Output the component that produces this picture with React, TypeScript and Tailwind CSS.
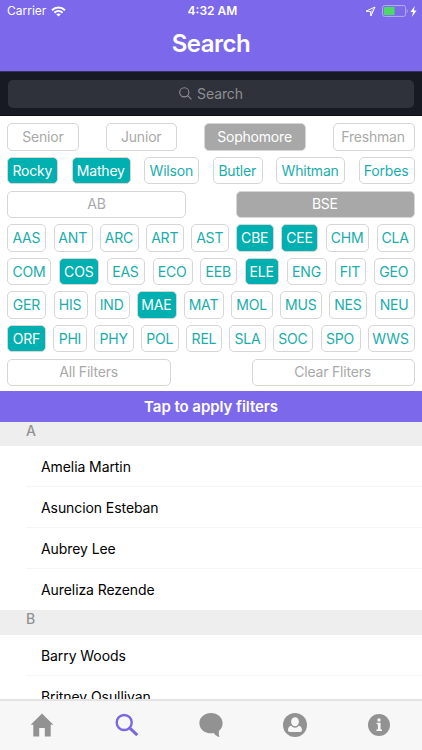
import { useState } from 'react';

interface Chip {
  label: string;
  width: number;
  on?: boolean;
}

interface ChipRow {
  tone: 'gray' | 'teal';
  chips: Chip[];
}

const initialRows: ChipRow[] = [
  {
    tone: 'gray',
    chips: [
      { label: 'Senior', width: 72 },
      { label: 'Junior', width: 71.5 },
      { label: 'Sophomore', width: 102, on: true },
      { label: 'Freshman', width: 82 },
    ],
  },
  {
    tone: 'teal',
    chips: [
      { label: 'Rocky', width: 51, on: true },
      { label: 'Mathey', width: 59, on: true },
      { label: 'Wilson', width: 55 },
      { label: 'Butler', width: 50 },
      { label: 'Whitman', width: 69 },
      { label: 'Forbes', width: 56 },
    ],
  },
  {
    tone: 'gray',
    chips: [
      { label: 'AB', width: 179 },
      { label: 'BSE', width: 178.5, on: true },
    ],
  },
  {
    tone: 'teal',
    chips: [
      { label: 'AAS', width: 39 },
      { label: 'ANT', width: 39 },
      { label: 'ARC', width: 39 },
      { label: 'ART', width: 38 },
      { label: 'AST', width: 37.5 },
      { label: 'CBE', width: 38, on: true },
      { label: 'CEE', width: 37, on: true },
      { label: 'CHM', width: 43.5 },
      { label: 'CLA', width: 38 },
    ],
  },
  {
    tone: 'teal',
    chips: [
      { label: 'COM', width: 44 },
      { label: 'COS', width: 40, on: true },
      { label: 'EAS', width: 37.5 },
      { label: 'ECO', width: 40 },
      { label: 'EEB', width: 36.5 },
      { label: 'ELE', width: 34.5, on: true },
      { label: 'ENG', width: 39.5 },
      { label: 'FIT', width: 31.5 },
      { label: 'GEO', width: 40.5 },
    ],
  },
  {
    tone: 'teal',
    chips: [
      { label: 'GER', width: 39 },
      { label: 'HIS', width: 34 },
      { label: 'IND', width: 35 },
      { label: 'MAE', width: 40, on: true },
      { label: 'MAT', width: 40 },
      { label: 'MOL', width: 42 },
      { label: 'MUS', width: 42 },
      { label: 'NES', width: 38 },
      { label: 'NEU', width: 40 },
    ],
  },
  {
    tone: 'teal',
    chips: [
      { label: 'ORF', width: 39, on: true },
      { label: 'PHI', width: 34 },
      { label: 'PHY', width: 39.5 },
      { label: 'POL', width: 38.5 },
      { label: 'REL', width: 36 },
      { label: 'SLA', width: 37 },
      { label: 'SOC', width: 40 },
      { label: 'SPO', width: 40 },
      { label: 'WWS', width: 47 },
    ],
  },
  {
    tone: 'gray',
    chips: [
      { label: 'All Filters', width: 163.5 },
      { label: 'Clear Fliters', width: 163 },
    ],
  },
];

const sections = [
  { letter: 'A', names: ['Amelia Martin', 'Asuncion Esteban', 'Aubrey Lee', 'Aureliza Rezende'] },
  { letter: 'B', names: ['Barry Woods', 'Britney Osullivan'] },
];

function chipColors(tone: ChipRow['tone'], on?: boolean) {
  if (tone === 'teal') {
    return on ? 'bg-[#00b0b0] text-white' : 'bg-white text-[#1aadaa]';
  }
  return on ? 'bg-[#a8a8a8] text-white' : 'bg-white text-[#a9a9a9]';
}

function StatusBar() {
  return (
    <div className="grid h-[22px] grid-cols-3 items-center text-[12px] text-white">
      <div className="flex items-center gap-[5px] pl-[7px]">
        <span className="text-[12px]">Carrier</span>
        <svg width="15" height="11" viewBox="0 0 15 11" fill="none" stroke="currentColor" strokeWidth="2">
          <path d="M1 4.2C4.7 0.5 10.3 0.5 14 4.2" />
          <path d="M3.4 6.7C5.8 4.4 9.2 4.4 11.6 6.7" />
          <path d="M7.5 10.6L5.2 8.3C6.5 7.1 8.5 7.1 9.8 8.3Z" fill="currentColor" stroke="none" />
        </svg>
      </div>
      <div className="pl-[3px] text-center text-[12px] font-semibold">4:32 AM</div>
      <div className="flex items-center justify-end pr-[5px]">
        <svg className="mr-[6px]" width="11" height="11" viewBox="0 0 11 11" fill="none" stroke="currentColor" strokeWidth="1">
          <path d="M1 5.2L10 1L5.9 10L5.5 5.5Z" strokeLinejoin="round" />
          <path d="M5.5 5.5L10 1L5.9 10Z" fill="currentColor" fillOpacity="0.45" stroke="none" />
        </svg>
        <svg width="27" height="12" viewBox="0 0 27 12">
          <rect x="0.6" y="0.6" width="23" height="10.8" rx="2" fill="none" stroke="#b9aef5" />
          <rect x="2" y="2" width="10.6" height="8" rx="0.6" fill="#4cd964" />
          <path d="M24.8 4V8C26 7.6 26 4.4 24.8 4Z" fill="#b9aef5" />
        </svg>
        <svg className="ml-px" width="7" height="11" viewBox="0 0 7 11" fill="currentColor">
          <path d="M4.8 0L0.4 6H3.1L1.8 11L6.6 4.6H3.8Z" />
        </svg>
      </div>
    </div>
  );
}

function TabBar() {
  return (
    <nav className="grid h-[51px] shrink-0 grid-cols-5 border-t-2 border-[#e3e3e3] bg-[#f7f7f7] text-[#929292]">
      <button className="flex items-center justify-center pb-px">
        <svg width="24" height="24" viewBox="0 0 24 24" fill="currentColor">
          <path d="M12 0.5L23.3 11.7H20.7V23.5H14.8V15H9.2V23.5H3.3V11.7H0.7Z" />
        </svg>
      </button>
      <button className="flex items-center justify-center pb-[2px] text-[#7b68e0]">
        <svg width="24" height="24" viewBox="0 0 24 24" fill="none" stroke="currentColor">
          <circle cx="9.2" cy="9.5" r="7.5" strokeWidth="2.4" />
          <path d="M14.6 14.8L22.3 22.2" strokeWidth="3" />
        </svg>
      </button>
      <button className="flex items-center justify-center pb-px">
        <svg width="24" height="26" viewBox="0 0 24 26" fill="currentColor">
          <path d="M12 1C5.5 1 0.4 5.3 0.4 11.2C0.4 17 5.5 21.3 12 21.3C13 21.3 13.9 21.2 14.8 21C16 23 17.8 24.6 20.5 25C19.7 23.2 19.7 21.2 20 18.8C22.3 17 23.6 14.3 23.6 11.2C23.6 5.3 18.5 1 12 1Z" />
        </svg>
      </button>
      <button className="flex items-center justify-center pb-px">
        <svg width="24" height="24" viewBox="0 0 24 24">
          <circle cx="12" cy="12" r="12" fill="currentColor" />
          <ellipse cx="12" cy="8.8" rx="3.9" ry="4.5" fill="#f7f7f7" />
          <path d="M8.2 12.8C9.2 14 10.5 14.7 12 14.7C13.5 14.7 14.8 14 15.8 12.8C18 13.2 19 14.6 19 17.3C19 18.4 18.2 19 17 19H7C5.8 19 5 18.4 5 17.3C5 14.6 6 13.2 8.2 12.8Z" fill="#f7f7f7" />
        </svg>
      </button>
      <button className="flex items-center justify-center pr-px pb-px">
        <svg width="22" height="22" viewBox="0 0 22 22">
          <circle cx="11" cy="11" r="11" fill="currentColor" />
          <circle cx="11" cy="6" r="1.7" fill="#f7f7f7" />
          <path d="M8.6 8.8H12.6V15.5H14V17H8.4V15.5H9.9V10.2H8.6Z" fill="#f7f7f7" />
        </svg>
      </button>
    </nav>
  );
}

export default function App() {
  const [rows, setRows] = useState<ChipRow[]>(initialRows);

  const toggle = (rowIndex: number, label: string) => {
    setRows(prev => prev.map((row, i) => (
      i !== rowIndex
        ? row
        : { ...row, chips: row.chips.map(c => (c.label === label ? { ...c, on: !c.on } : c)) }
    )));
  };

  return (
    <div className="flex h-[750px] w-[422px] flex-col overflow-hidden bg-white font-[Inter,sans-serif]">
      <header className="h-[71px] shrink-0 bg-[#7b68ea]">
        <StatusBar />
        <h1 className="text-center text-[24px] leading-[44px] font-semibold tracking-[-0.5px] text-white">Search</h1>
      </header>

      <div className="h-[45px] shrink-0 border-t border-b border-t-[#39345f] border-b-[#0c0c14] bg-[#171a23] px-2 pt-2">
        <div className="flex h-[28px] items-center justify-center gap-[5px] rounded-[5px] bg-[#2f323a] pb-px text-[14px] tracking-[-0.1px] text-[#8e8e93]">
          <svg width="13" height="13" viewBox="0 0 13 13" fill="none" stroke="currentColor" strokeWidth="1.1">
            <circle cx="5.3" cy="5.3" r="4.6" />
            <path d="M8.6 8.6L12.4 12.4" />
          </svg>
          <span>Search</span>
        </div>
      </div>

      <div className="flex h-[275px] shrink-0 flex-col gap-[6.1px] px-[7.4px] pt-[7.4px]">
        {rows.map((row, i) => (
          <div key={i} className="flex justify-between">
            {row.chips.map((chip) => (
              <button
                key={chip.label}
                onClick={() => toggle(i, chip.label)}
                style={{ width: chip.width }}
                className={`flex h-[27.5px] shrink-0 items-center justify-center rounded-[5px] border border-[#d6d6d6] pr-px pb-px text-[14px] tracking-[-0.2px] whitespace-nowrap ${chipColors(row.tone, chip.on)}`}
              >
                {chip.label}
              </button>
            ))}
          </div>
        ))}
      </div>

      <button className="h-[31px] shrink-0 bg-[#7b68ea] pt-px text-[15px] font-semibold tracking-[-0.05px] text-white">
        Tap to apply filters
      </button>

      <div className="min-h-0 flex-1 overflow-hidden">
        {sections.map((section) => (
          <section key={section.letter}>
            <h2 className="h-[24.3px] bg-[#eeeeee] pl-[26px] text-[14px] leading-[17px] font-medium text-[#929292]">
              {section.letter}
            </h2>
            <ul className="pl-[26px]">
              {section.names.map((name) => (
                <li key={name} className="h-[41px] border-b border-[#f6f6f6] pl-[15px] text-[14px] leading-[41px] tracking-[-0.08px] text-black last:border-b-0">
                  {name}
                </li>
              ))}
            </ul>
          </section>
        ))}
      </div>

      <TabBar />
    </div>
  );
}
